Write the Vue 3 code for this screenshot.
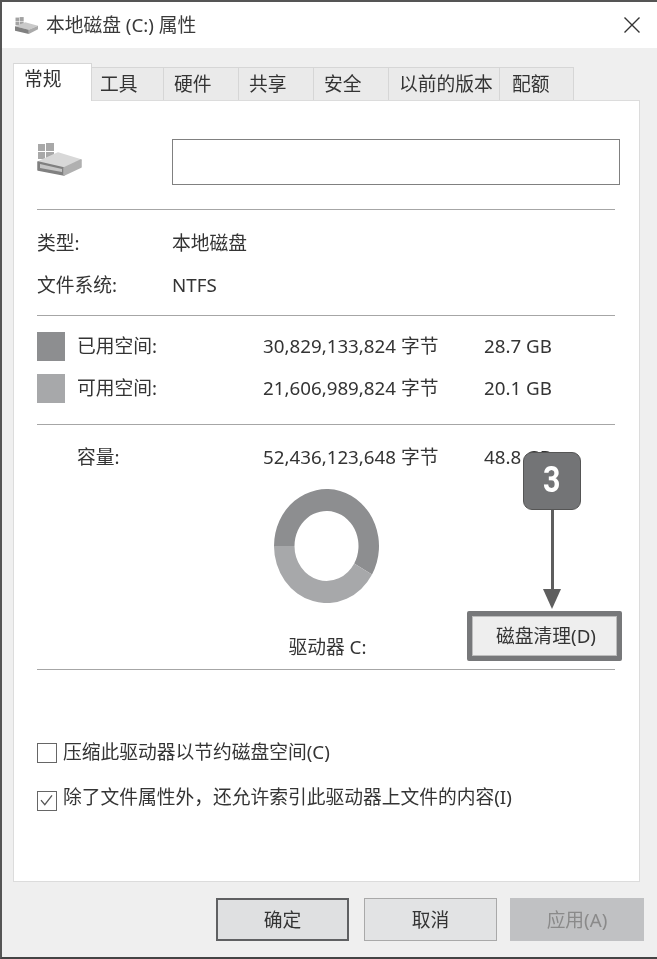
<script setup>
const tabs = ['工具', '硬件', '共享', '安全', '以前的版本', '配额']
const tabWidths = [72, 75, 75, 75, 111, 74]
const usage = [
  { label: '已用空间:', bytes: '30,829,133,824 字节', size: '28.7 GB', tone: 'used' },
  { label: '可用空间:', bytes: '21,606,989,824 字节', size: '20.1 GB', tone: 'free' }
]
</script>

<template>
  <div class="window">
    <header class="titlebar">
      <svg class="title-icon" viewBox="0 0 45 33">
        <rect x="1" y="1" width="7" height="7" fill="#a2a2a2" />
        <rect x="9" y="0" width="8" height="8" fill="#a2a2a2" />
        <rect x="1" y="9" width="7" height="7" fill="#a2a2a2" />
        <rect x="9" y="9" width="8" height="8" fill="#a2a2a2" />
        <path d="M0 18 20 10 45 17 27 25Z" fill="#c9c9c9" />
        <path d="M0 18 27 25V33L0 27Z" fill="#808080" />
        <path d="M27 25 45 17V24L27 33Z" fill="#aaa" />
      </svg>
      <span class="title">本地磁盘 (C:) 属性</span>
      <svg class="close" viewBox="0 0 16 16"><path d="M.5.5 15.5 15.5M15.5.5.5 15.5" /></svg>
    </header>

    <div class="body">
      <nav class="tabs">
        <div class="tab active">常规</div>
        <div v-for="(t, i) in tabs" :key="t" class="tab" :style="{ width: tabWidths[i] + 'px' }">{{ t }}</div>
      </nav>

      <section class="panel">
        <div class="head">
          <svg class="drive" viewBox="0 0 45 33">
            <rect x="1" y="1" width="7" height="7" fill="#a8a8a8" />
            <rect x="9" y="0" width="8" height="8" fill="#a8a8a8" />
            <rect x="1" y="9" width="7" height="7" fill="#a8a8a8" />
            <rect x="9" y="9" width="8" height="8" fill="#a8a8a8" />
            <g stroke-linejoin="round" stroke-width="1.5">
              <path d="M1 19 21 10 44 17 27 25Z" fill="#d8d8d8" stroke="#d8d8d8" />
              <path d="M1 19 27 25V32L1 27Z" fill="#808080" stroke="#808080" />
              <path d="M3 21 25 26V29L3 25Z" fill="#c6c6c6" />
              <path d="M27 25 44 17V24L27 32Z" fill="#b0b0b0" stroke="#b0b0b0" />
            </g>
          </svg>
          <div class="name-box"></div>
        </div>
        <hr class="rule first" />
        <div class="info"><span>类型:</span><span>本地磁盘</span></div>
        <div class="info"><span>文件系统:</span><span>NTFS</span></div>
        <hr class="rule mid" />
        <div v-for="u in usage" :key="u.label" class="usage">
          <i class="swatch" :class="u.tone"></i>
          <span>{{ u.label }}</span>
          <span>{{ u.bytes }}</span>
          <span>{{ u.size }}</span>
        </div>
        <hr class="rule low" />
        <div class="usage">
          <i class="swatch none"></i>
          <span>容量:</span>
          <span>52,436,123,648 字节</span>
          <span>48.8 GB</span>
        </div>

        <div class="chart-area">
          <div class="chart">
            <svg class="donut" viewBox="0 0 105 114">
              <path d="M0 57A52.5 57 0 1 1 98 85.5L80.2 74.5A32 35 0 1 0 20.5 57Z" fill="#8d8e90" />
              <path d="M98 85.5A52.5 57 0 0 1 0 57L20.5 57A32 35 0 0 0 80.2 74.5Z" fill="#a7a8aa" />
            </svg>
            <div class="drive-label">驱动器 C:</div>
          </div>
          <button class="clean">磁盘清理(D)</button>
        </div>
        <hr class="rule" />

        <label class="check one"><span class="box"></span>压缩此驱动器以节约磁盘空间(C)</label>
        <label class="check two">
          <span class="box">
            <svg viewBox="0 0 20 20"><path d="M3.5 9.5 8 15 16.5 4" /></svg>
          </span>除了文件属性外，还允许索引此驱动器上文件的内容(I)
        </label>
      </section>

      <footer class="actions">
        <button class="btn default">确定</button>
        <button class="btn">取消</button>
        <button class="btn disabled">应用(A)</button>
      </footer>
    </div>

    <div class="callout">
      <div class="badge"><span class="digit">3</span></div>
      <div class="stem"></div>
      <div class="head-arrow"></div>
    </div>
  </div>
</template>

<style>
html, body { margin: 0; background: #fff; }
</style>

<style scoped>
* { box-sizing: border-box; }
.window {
  position: relative;
  width: 657px;
  height: 959px;
  display: flex;
  flex-direction: column;
  border-top: 2px solid #555;
  border-left: 2px solid #555;
  border-bottom: 2px solid #444;
  background: #efefef;
  color: #343434;
  font: 18.75px/24px "Noto Sans", "Noto Sans CJK SC", sans-serif;
  filter: blur(0.5px);
  overflow: hidden;
}
.titlebar {
  height: 46px;
  flex: none;
  display: flex;
  align-items: center;
  background: #fff;
  padding: 0 16px 0 13px;
}
.title-icon { width: 23px; height: 17px; margin-right: 8px; }
.title { color: #3a3a3a; }
.close { width: 16px; height: 16px; margin-left: auto; margin-right: 1px; fill: none; stroke: #333; stroke-width: 1.4; }
.body { flex: 1; display: flex; flex-direction: column; padding: 15px 0 0 11px; }
.tabs { display: flex; align-items: flex-end; height: 37px; position: relative; z-index: 1; }
.tab {
  height: 33px;
  padding: 4px 0 0 10px;
  background: #eaeaea;
  border: 1px solid #d6d6d6;
  border-bottom: 0;
  border-left: 0;
  white-space: nowrap;
}
.tab:nth-child(2) { padding-left: 8px; }
.tab:last-child { padding-left: 12px; }
.tab.active {
  width: 79px;
  height: 38px;
  margin-bottom: -1px;
  padding: 3px 0 0 10px;
  background: #fff;
  border-left: 1px solid #dcdcdc;
}
.panel {
  width: 627px;
  height: 782px;
  flex: none;
  padding: 38px 20px 0 23px;
  background: #fff;
  border: 1px solid #dcdcdc;
}
.head { display: flex; height: 46px; }
.drive { width: 45px; height: 33px; margin-top: 4px; flex: none; }
.name-box { width: 448px; height: 46px; flex: none; margin-left: 90px; border: 1.5px solid #808080; }
.rule { height: 1px; margin: 0; border: 0; background: #a6a6a6; width: 578px; }
.rule.first { margin: 24px 0 12px; }
.rule.mid { margin: 9px 0; }
.rule.low { margin: 15px 0 11px; }
.info { display: grid; grid-template-columns: 135px 1fr; height: 42px; align-items: center; }
.usage { display: grid; grid-template-columns: 40px 186px 221px 1fr; height: 42px; align-items: center; }
.swatch { display: block; width: 28px; height: 29px; }
.swatch.used { background: #8d8e90; }
.swatch.free { background: #a7a8aa; }
.chart-area { display: flex; height: 191px; padding-top: 11px; }
.chart { margin-left: 237px; width: 105px; flex: none; }
.donut { display: block; width: 105px; height: 114px; }
.drive-label { margin-top: 32px; padding-left: 2px; text-align: center; white-space: nowrap; }
.clean {
  width: 155px;
  height: 50px;
  flex: none;
  margin: 122px 0 0 88px;
  border: 5px solid #77787a;
  border-radius: 2px;
  box-shadow: inset 0 0 0 1px #bdbdbd;
  background: #eeeeee;
  color: #343434;
  font: inherit;
  padding: 0 0 0 3px;
}
.check { display: flex; height: 24px; align-items: center; white-space: nowrap; }
.check.one { margin-top: 70px; }
.check.two { margin-top: 21px; }
.box {
  width: 20px;
  height: 20px;
  flex: none;
  margin-right: 6px;
  border: 1.5px solid #666;
  background: #fff;
  position: relative;
  top: 1px;
}
.check.two .box { top: 4px; }
.box svg { display: block; width: 17px; height: 17px; fill: none; stroke: #555; stroke-width: 1.5; }
.actions { display: flex; padding: 16px 0 0 203px; gap: 15px; }
.btn {
  width: 133px;
  height: 43px;
  background: #e2e3e4;
  border: 1.5px solid #a9a9a9;
  color: #343434;
  font: inherit;
  padding: 0;
}
.btn.default { border: 2.5px solid #5f6062; background: #dfe0e1; }
.btn.disabled { background: #c0c1c3; border-color: #c0c1c3; color: #8a8a8a; margin-left: -2px; width: 134px; }
.callout {
  position: absolute;
  left: 521px;
  top: 450px;
  width: 58px;
  display: flex;
  flex-direction: column;
  align-items: center;
}
.badge {
  width: 58px;
  height: 58px;
  border-radius: 9px;
  background: #737476;
  border: 1.5px solid #555;
  color: #fff;
  font: 700 37px/54px "Roboto", "Liberation Sans", sans-serif;
  text-align: center;
}
.digit { display: inline-block; transform: scaleX(0.82); }
.stem { width: 3px; height: 80px; background: #5e5e5e; }
.head-arrow {
  width: 0;
  height: 0;
  border-left: 9px solid transparent;
  border-right: 9px solid transparent;
  border-top: 20px solid #5e5e5e;
  margin-top: -1px;
}
</style>
